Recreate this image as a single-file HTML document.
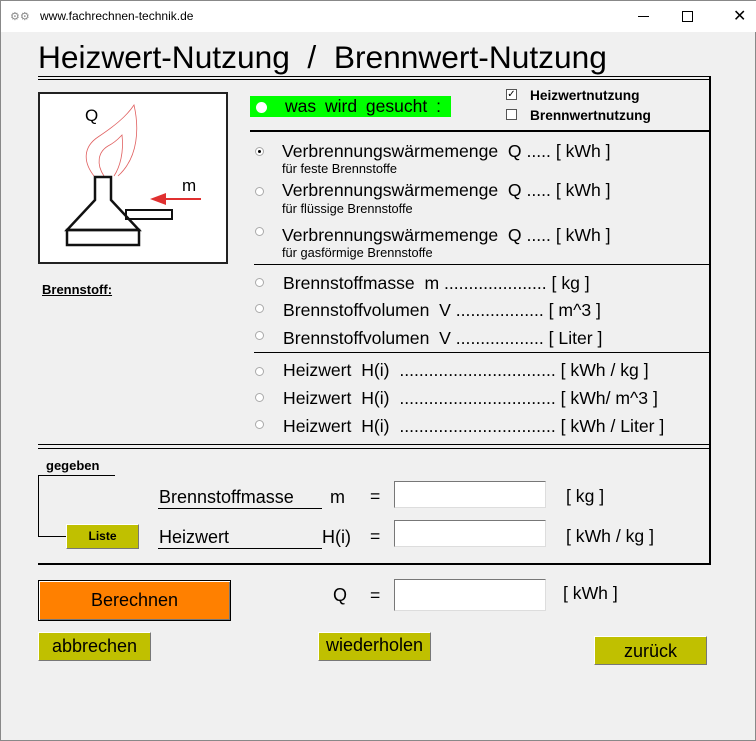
<!DOCTYPE html>
<html><head><meta charset="utf-8"><style>
body{margin:0;width:756px;height:741px;background:#f0f0f0;font-family:"Liberation Sans",Arial,sans-serif;position:relative;overflow:hidden;border:1px solid #888;box-sizing:border-box}
.a{position:absolute;white-space:nowrap;color:#000}
.h{position:absolute;background:#000}
.r{position:absolute;width:9px;height:9px;border-radius:50%;background:#fff;border:1px solid #aaa;box-sizing:border-box}
.r.on::after{content:"";position:absolute;left:2px;top:2px;width:3px;height:3px;border-radius:50%;background:#000}
.btn{position:absolute;background:#c0c000;border:1px solid #fff;border-right-color:#777;border-bottom-color:#777;box-sizing:border-box;text-align:center;font-size:18px;color:#000}
.in{position:absolute;background:#fff;border:1px solid #777;border-right-color:#ddd;border-bottom-color:#ddd;box-sizing:border-box;width:152px}
.s{font-size:17.6px}
.xs{font-size:12.8px}
</style></head><body>
<div style="position:absolute;left:0;top:0;width:756px;height:31px;background:#fff"></div>
<div class="a" style="left:9px;top:9px;font-size:11px;color:#888">⚙⚙</div>
<div class="a" style="left:39px;top:8px;font-size:12px">www.fachrechnen-technik.de</div>
<div class="h" style="left:637px;top:15px;width:11px;height:1px"></div>
<div style="position:absolute;left:681px;top:10px;width:9px;height:9px;border:1px solid #000"></div>
<div class="a" style="left:732px;top:5px;font-size:16px">✕</div>

<div class="a" style="left:37px;top:38px;font-size:31.7px">Heizwert-Nutzung&nbsp; /&nbsp; Brennwert-Nutzung</div>
<div class="h" style="left:37px;top:75px;width:673px;height:1px"></div>
<div class="h" style="left:37px;top:78px;width:673px;height:1px"></div>
<div class="h" style="left:708px;top:75px;width:2px;height:489px"></div>
<div class="h" style="left:249px;top:129px;width:460px;height:2px"></div>
<div class="h" style="left:253px;top:263px;width:456px;height:1px"></div>
<div class="h" style="left:253px;top:351px;width:456px;height:1px"></div>
<div class="h" style="left:37px;top:443px;width:673px;height:1px"></div>
<div class="h" style="left:37px;top:447px;width:673px;height:1px"></div>
<div class="h" style="left:37px;top:562px;width:673px;height:2px"></div>

<svg style="position:absolute;left:37px;top:91px" width="190" height="172" viewBox="0 0 190 172">
<rect x="1" y="1" width="188" height="170" fill="#fff" stroke="#222" stroke-width="2"/>
<text x="47" y="29" font-family="Liberation Sans" font-size="17">Q</text>
<text x="144" y="99" font-family="Liberation Sans" font-size="17">m</text>
<path d="M56 84 C45 70 45 55 60 45 C75 35 88 25 96 13 C101 35 101 65 80 84" fill="none" stroke="#e06060" stroke-width="0.8"/>
<path d="M66 84 C58 72 60 60 70 54 C78 50 82 45 84 43 C86 60 82 75 76 84" fill="none" stroke="#e06060" stroke-width="0.8"/>
<path d="M57 85 H73 V108 L101 138 H29 L57 108 Z" fill="none" stroke="#111" stroke-width="2.5"/>
<rect x="29" y="138" width="72" height="15" fill="none" stroke="#111" stroke-width="2.5"/>
<rect x="88" y="118" width="46" height="9" fill="none" stroke="#111" stroke-width="2"/>
<line x1="126" y1="107" x2="163" y2="107" stroke="#e03030" stroke-width="2"/>
<path d="M112 107 L128 101 L128 113 Z" fill="#e03030"/>
</svg>

<div class="a" style="left:41px;top:281px;font-size:13px;font-weight:bold;text-decoration:underline">Brennstoff:</div>

<div style="position:absolute;left:249px;top:95px;width:201px;height:21px;background:#00ff00"></div>
<div class="r" style="left:255px;top:101px;width:11px;height:11px;border:none"></div>
<div class="a" style="left:284px;top:95px;font-size:17.5px;word-spacing:4px">was wird gesucht :</div>
<div style="position:absolute;left:505px;top:88px;width:11px;height:11px;background:#fff;border:1px solid #555;box-sizing:border-box;font-size:10px;line-height:9px;text-align:center">✓</div>
<div style="position:absolute;left:505px;top:108px;width:11px;height:11px;background:#fff;border:1px solid #555;box-sizing:border-box"></div>
<div class="a" style="left:529px;top:87px;font-size:13.7px;font-weight:bold">Heizwertnutzung</div>
<div class="a" style="left:529px;top:107px;font-size:13.7px;font-weight:bold">Brennwertnutzung</div>

<div class="r on" style="left:254px;top:146px"></div>
<div class="a s" style="left:281px;top:140px">Verbrennungswärmemenge&nbsp; Q ..... [ kWh ]</div>
<div class="a xs" style="left:281px;top:160px">für feste Brennstoffe</div>
<div class="r" style="left:254px;top:186px"></div>
<div class="a s" style="left:281px;top:179px">Verbrennungswärmemenge&nbsp; Q ..... [ kWh ]</div>
<div class="a xs" style="left:281px;top:200px">für flüssige Brennstoffe</div>
<div class="r" style="left:254px;top:226px"></div>
<div class="a s" style="left:281px;top:224px">Verbrennungswärmemenge&nbsp; Q ..... [ kWh ]</div>
<div class="a xs" style="left:281px;top:244px">für gasförmige Brennstoffe</div>

<div class="r" style="left:254px;top:277px"></div>
<div class="a s" style="left:282px;top:272px">Brennstoffmasse&nbsp; m ..................... [ kg ]</div>
<div class="r" style="left:254px;top:303px"></div>
<div class="a s" style="left:282px;top:299px">Brennstoffvolumen&nbsp; V .................. [ m^3 ]</div>
<div class="r" style="left:254px;top:330px"></div>
<div class="a s" style="left:282px;top:327px">Brennstoffvolumen&nbsp; V .................. [ Liter ]</div>

<div class="r" style="left:254px;top:366px"></div>
<div class="a s" style="left:282px;top:359px">Heizwert&nbsp; H(i)&nbsp; ................................ [ kWh / kg ]</div>
<div class="r" style="left:254px;top:392px"></div>
<div class="a s" style="left:282px;top:387px">Heizwert&nbsp; H(i)&nbsp; ................................ [ kWh/ m^3 ]</div>
<div class="r" style="left:254px;top:419px"></div>
<div class="a s" style="left:282px;top:415px">Heizwert&nbsp; H(i)&nbsp; ................................ [ kWh / Liter ]</div>

<div class="a" style="left:45px;top:457px;font-size:13px;font-weight:bold">gegeben</div>
<div class="h" style="left:37px;top:474px;width:77px;height:1px"></div>
<div class="h" style="left:37px;top:474px;width:1px;height:62px"></div>
<div class="h" style="left:37px;top:535px;width:28px;height:1px"></div>
<div class="btn" style="left:65px;top:523px;width:73px;height:25px;font-size:12px;font-weight:bold;line-height:23px">Liste</div>

<div class="a" style="left:158px;top:486px;font-size:18px">Brennstoffmasse</div>
<div class="h" style="left:157px;top:507px;width:164px;height:1px"></div>
<div class="a" style="left:329px;top:486px;font-size:18px">m</div>
<div class="a s" style="left:369px;top:485px">=</div>
<div class="in" style="left:393px;top:480px;height:27px"></div>
<div class="a s" style="left:565px;top:485px">[ kg ]</div>

<div class="a" style="left:158px;top:526px;font-size:18px">Heizwert</div>
<div class="h" style="left:157px;top:547px;width:164px;height:1px"></div>
<div class="a" style="left:321px;top:526px;font-size:18px">H(i)</div>
<div class="a s" style="left:369px;top:525px">=</div>
<div class="in" style="left:393px;top:519px;height:27px"></div>
<div class="a s" style="left:565px;top:525px">[ kWh / kg ]</div>

<div style="position:absolute;left:37px;top:579px;width:193px;height:41px;background:#ff8000;border:1px solid #000;box-sizing:border-box;box-shadow:inset 1px 1px 0 #fff,inset -1px -1px 0 #777;text-align:center;line-height:39px;font-size:18px">Berechnen</div>
<div class="a" style="left:332px;top:584px;font-size:18px">Q</div>
<div class="a s" style="left:369px;top:584px">=</div>
<div class="in" style="left:393px;top:578px;height:32px"></div>
<div class="a s" style="left:562px;top:582px">[ kWh ]</div>

<div class="btn" style="left:37px;top:631px;width:113px;height:29px;line-height:27px">abbrechen</div>
<div class="btn" style="left:317px;top:631px;width:113px;height:29px;line-height:25px">wiederholen</div>
<div class="btn" style="left:593px;top:635px;width:113px;height:29px;line-height:28px">zurück</div>
</body></html>
